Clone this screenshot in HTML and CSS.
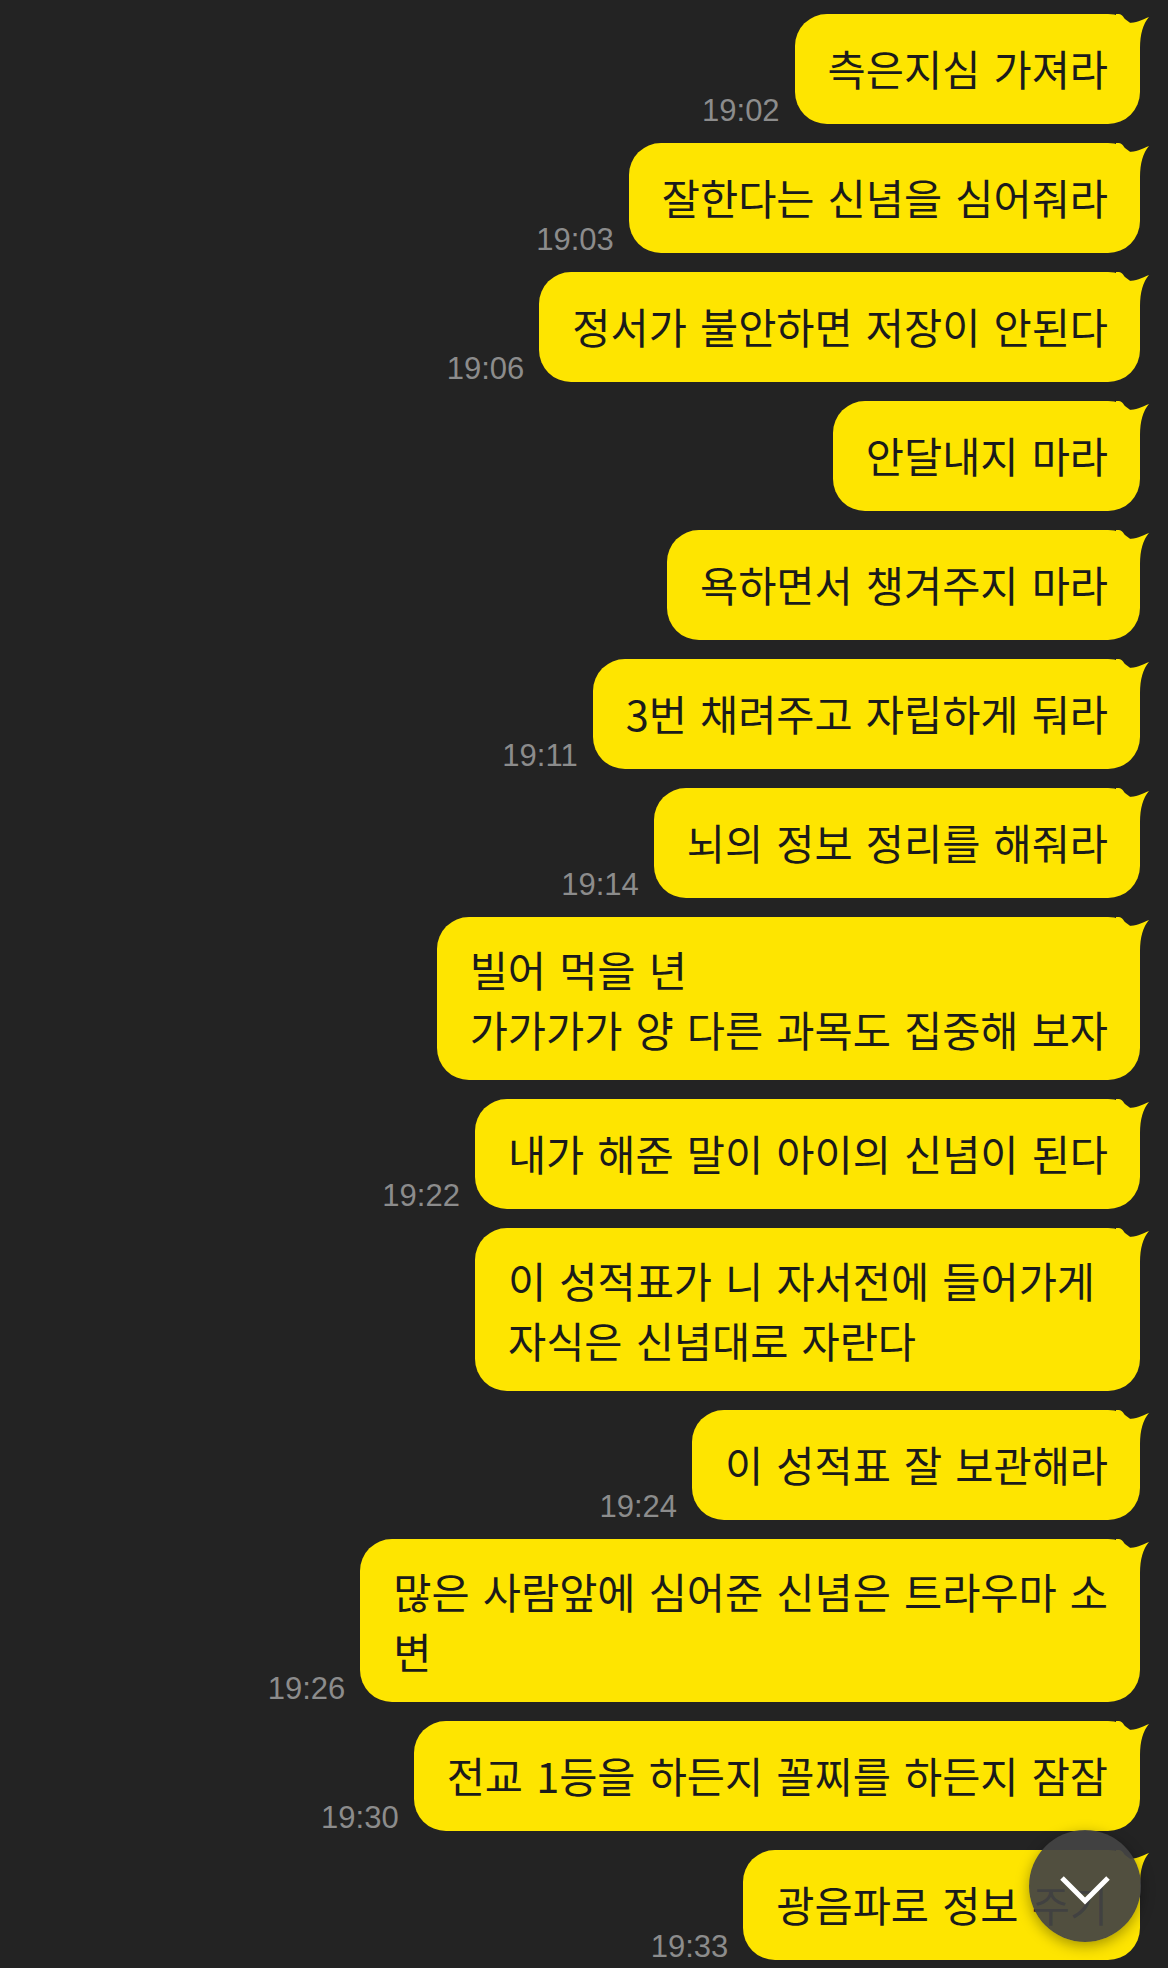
FILE: index.html
```html
<!DOCTYPE html>
<html lang="ko">
<head>
    <meta charset="UTF-8">
    <meta name="viewport" content="width=device-width, initial-scale=1.0">
    <title>채팅</title>
    <link rel="stylesheet" href="styles.css">
</head>
<body>
    <div class="chat">
        <div class="row">
            <span class="time">19:02</span>
            <div class="bubble">측은지심 가져라<svg class="tail" viewBox="0 0 34 44"><path d="M0,0 L3,0 C8,0 9,9 13,9 C19,9 26,6 33,3 C27,10 24,20 24,34 L24,44 L0,44 Z"/></svg></div>
        </div>
        <div class="row">
            <span class="time">19:03</span>
            <div class="bubble">잘한다는 신념을 심어줘라<svg class="tail" viewBox="0 0 34 44"><path d="M0,0 L3,0 C8,0 9,9 13,9 C19,9 26,6 33,3 C27,10 24,20 24,34 L24,44 L0,44 Z"/></svg></div>
        </div>
        <div class="row">
            <span class="time">19:06</span>
            <div class="bubble">정서가 불안하면 저장이 안된다<svg class="tail" viewBox="0 0 34 44"><path d="M0,0 L3,0 C8,0 9,9 13,9 C19,9 26,6 33,3 C27,10 24,20 24,34 L24,44 L0,44 Z"/></svg></div>
        </div>
        <div class="row">
            <div class="bubble">안달내지 마라<svg class="tail" viewBox="0 0 34 44"><path d="M0,0 L3,0 C8,0 9,9 13,9 C19,9 26,6 33,3 C27,10 24,20 24,34 L24,44 L0,44 Z"/></svg></div>
        </div>
        <div class="row">
            <div class="bubble">욕하면서 챙겨주지 마라<svg class="tail" viewBox="0 0 34 44"><path d="M0,0 L3,0 C8,0 9,9 13,9 C19,9 26,6 33,3 C27,10 24,20 24,34 L24,44 L0,44 Z"/></svg></div>
        </div>
        <div class="row">
            <span class="time">19:11</span>
            <div class="bubble">3번 채려주고 자립하게 둬라<svg class="tail" viewBox="0 0 34 44"><path d="M0,0 L3,0 C8,0 9,9 13,9 C19,9 26,6 33,3 C27,10 24,20 24,34 L24,44 L0,44 Z"/></svg></div>
        </div>
        <div class="row">
            <span class="time">19:14</span>
            <div class="bubble">뇌의 정보 정리를 해줘라<svg class="tail" viewBox="0 0 34 44"><path d="M0,0 L3,0 C8,0 9,9 13,9 C19,9 26,6 33,3 C27,10 24,20 24,34 L24,44 L0,44 Z"/></svg></div>
        </div>
        <div class="row">
            <div class="bubble multi">빌어 먹을 년<br>가가가가 양 다른 과목도 집중해 보자<svg class="tail" viewBox="0 0 34 44"><path d="M0,0 L3,0 C8,0 9,9 13,9 C19,9 26,6 33,3 C27,10 24,20 24,34 L24,44 L0,44 Z"/></svg></div>
        </div>
        <div class="row">
            <span class="time">19:22</span>
            <div class="bubble">내가 해준 말이 아이의 신념이 된다<svg class="tail" viewBox="0 0 34 44"><path d="M0,0 L3,0 C8,0 9,9 13,9 C19,9 26,6 33,3 C27,10 24,20 24,34 L24,44 L0,44 Z"/></svg></div>
        </div>
        <div class="row">
            <div class="bubble multi wide">이 성적표가 니 자서전에 들어가게<br>자식은 신념대로 자란다<svg class="tail" viewBox="0 0 34 44"><path d="M0,0 L3,0 C8,0 9,9 13,9 C19,9 26,6 33,3 C27,10 24,20 24,34 L24,44 L0,44 Z"/></svg></div>
        </div>
        <div class="row">
            <span class="time">19:24</span>
            <div class="bubble">이 성적표 잘 보관해라<svg class="tail" viewBox="0 0 34 44"><path d="M0,0 L3,0 C8,0 9,9 13,9 C19,9 26,6 33,3 C27,10 24,20 24,34 L24,44 L0,44 Z"/></svg></div>
        </div>
        <div class="row">
            <span class="time">19:26</span>
            <div class="bubble multi">많은 사람앞에 심어준 신념은 트라우마 소<br>변<svg class="tail" viewBox="0 0 34 44"><path d="M0,0 L3,0 C8,0 9,9 13,9 C19,9 26,6 33,3 C27,10 24,20 24,34 L24,44 L0,44 Z"/></svg></div>
        </div>
        <div class="row">
            <span class="time">19:30</span>
            <div class="bubble">전교 1등을 하든지 꼴찌를 하든지 잠잠<svg class="tail" viewBox="0 0 34 44"><path d="M0,0 L3,0 C8,0 9,9 13,9 C19,9 26,6 33,3 C27,10 24,20 24,34 L24,44 L0,44 Z"/></svg></div>
        </div>
        <div class="row">
            <span class="time">19:33</span>
            <div class="bubble">광음파로 정보 주기<svg class="tail" viewBox="0 0 34 44"><path d="M0,0 L3,0 C8,0 9,9 13,9 C19,9 26,6 33,3 C27,10 24,20 24,34 L24,44 L0,44 Z"/></svg></div>
        </div>
    </div>

    <button class="scroll-down" aria-label="아래로">
        <svg viewBox="0 0 112 112"><path d="M33,48 L56,71 L79,48"/></svg>
    </button>
</body>
</html>
```

FILE: styles.css
```css
* {
    box-sizing: border-box;
    margin: 0;
    padding: 0;
}

html, body {
    height: 100%;
    overflow: hidden;
}

body {
    background-color: #232323;
    font-family: "Noto Sans CJK KR", "Noto Sans", sans-serif;
}

.chat {
    display: flex;
    flex-direction: column;
    gap: 19px;
    padding: 14px 28px 0 0;
}

.row {
    display: flex;
    justify-content: flex-end;
    align-items: flex-end;
    gap: 15px;
}

.time {
    font-family: "Liberation Sans", Arial, sans-serif;
    font-size: 31px;
    line-height: 27px;
    color: #8c8c8c;
    white-space: nowrap;
}

.bubble {
    position: relative;
    background: #fee500;
    color: #1b1b1b;
    font-size: 41.5px;
    line-height: 53px;
    word-spacing: 1.5px;
    padding: 28px 32px 29px 33px;
    border-radius: 32px;
    white-space: nowrap;
}

.bubble.multi {
    line-height: 60px;
    padding-top: 22px;
    padding-bottom: 21px;
}

.bubble.wide {
    padding-right: 45px;
}

.tail {
    position: absolute;
    top: 0;
    right: -10px;
    width: 34px;
    height: 44px;
}

.tail path {
    fill: #fee500;
}

.scroll-down {
    position: fixed;
    right: 27px;
    bottom: 26px;
    width: 112px;
    height: 112px;
    border: none;
    border-radius: 50%;
    background: rgba(68, 68, 68, 0.93);
    box-shadow: 0 4px 14px rgba(0, 0, 0, 0.35);
    cursor: pointer;
}

.scroll-down svg {
    display: block;
    width: 112px;
    height: 112px;
}

.scroll-down path {
    fill: none;
    stroke: #ffffff;
    stroke-width: 5;
}
```
